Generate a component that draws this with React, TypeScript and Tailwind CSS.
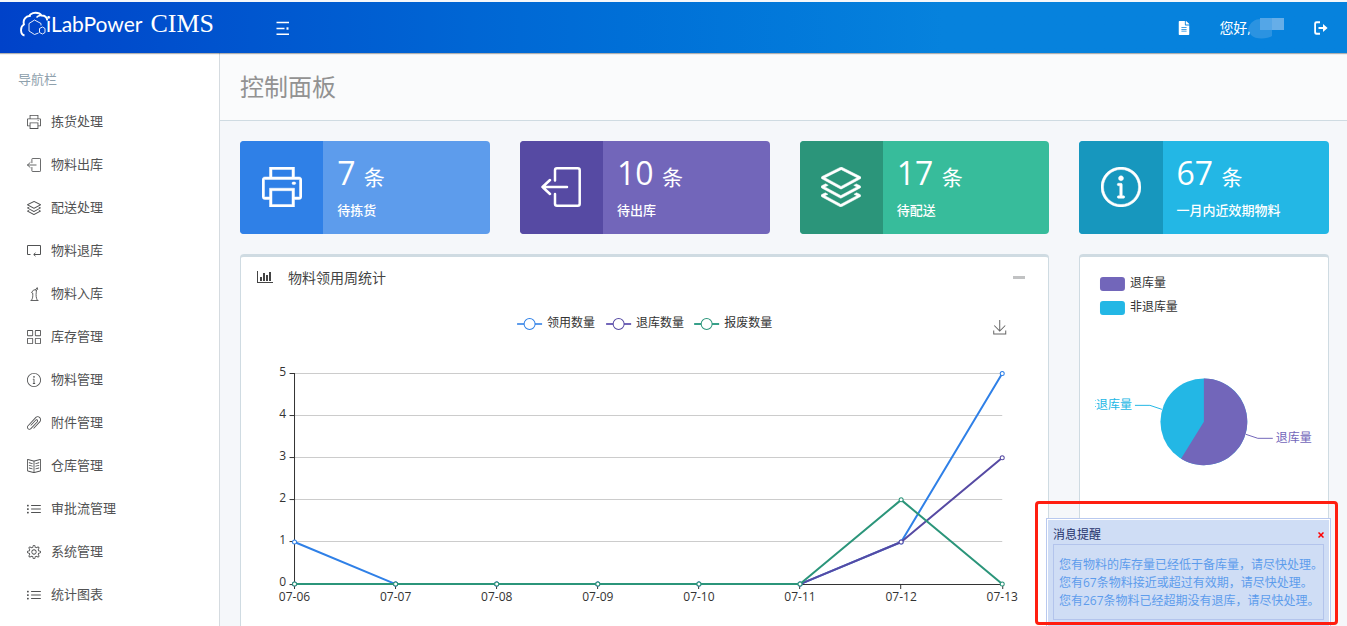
import type { ComponentType, ReactNode } from "react";
import {
  SlBookOpen,
  SlGrid,
  SlInfo,
  SlLayers,
  SlList,
  SlPaperClip,
  SlPrinter,
  SlSettings,
} from "react-icons/sl";
import { FaFileAlt } from "react-icons/fa";

interface IconProps {
  className?: string;
}

type Icon = ComponentType<IconProps>;

function ExitIcon({ className }: IconProps) {
  return (
    <svg viewBox="0 0 40 40" className={className} fill="none" stroke="currentColor" aria-hidden="true">
      <g strokeWidth="2.500" strokeLinecap="round" strokeLinejoin="round">
        <path d="M14 13.500V3.300a2 2 0 0 1 2-2h20.700a2 2 0 0 1 2 2v33.400a2 2 0 0 1-2 2H16a2 2 0 0 1-2-2V27" />
        <path d="M26 20H1.500M9 13l-7.500 7L9 27" />
      </g>
    </svg>
  );
}

function ReturnIcon({ className }: IconProps) {
  return (
    <svg viewBox="0 0 14 14" className={className} fill="none" stroke="currentColor" aria-hidden="true">
      <path d="M3.500 10.500h-3v-9h13v9H7" />
      <path d="M8.500 8.800 6.700 10.500l1.800 1.700" />
    </svg>
  );
}

function TowerIcon({ className }: IconProps) {
  return (
    <svg viewBox="0 0 14 14" className={className} fill="none" stroke="currentColor" strokeWidth="0.900" aria-hidden="true">
      <path d="M3.500 13.500h8M4.500 13.300c1.200-2 1.500-4 1.200-7.300L4.500 5.500l2.200-2.600h2.600v2.300c-.6 3 0 6 1 8.100M8.300 2.900 10.200.600l.5 1.700-1.400 1.200" />
    </svg>
  );
}

function BarChartIcon({ className }: IconProps) {
  return (
    <svg viewBox="0 0 16 12" className={className} fill="currentColor" aria-hidden="true">
      <path d="M0 0h1v11h15v1H0zM3 6h2v4H3zM6 2h2v8H6zM9 4h2v6H9zM12 1h2v9h-2z" />
    </svg>
  );
}

function MenuIcon({ className }: IconProps) {
  return (
    <svg viewBox="0 0 14 14" className={className} fill="none" stroke="currentColor" strokeWidth="1.600" aria-hidden="true">
      <path d="M.5 1.500h12.500M.5 7.500h8M.5 13.200h12.500" />
      <path d="M10.500 7.500h2" strokeWidth="2.400" />
    </svg>
  );
}

function SignOutIcon({ className }: IconProps) {
  return (
    <svg viewBox="0 0 14 14" className={className} fill="currentColor" aria-hidden="true">
      <path d="M2.500.300H6v2H2.800a.8.800 0 0 0-.8.800v7.800c0 .5.300.8.800.8H6v2H2.500A2.300 2.300 0 0 1 .2 11.400V2.600A2.300 2.300 0 0 1 2.500.300z" />
      <path d="M4.500 6H9V3l4.600 4L9 11V8H4.500z" />
    </svg>
  );
}

function CloudLogo({ className }: IconProps) {
  return (
    <svg viewBox="0 0 30 26" className={className} fill="none" stroke="currentColor" strokeLinejoin="round" aria-hidden="true">
      <path d="M4.500 24.500C0 23.500 0 15.500 4 13.500 2.500 9 6 4.500 10 5c-1.500-.4 1.500-3.200 5.500-3.200S20.500 3 21.500 4.500c3.500 0 5.500 2 5.800 5" strokeWidth="1.900" />
      <path d="M21.500 4.500c-2.500-.3-4 .7-5 2" strokeWidth="1.400" />
      <path d="m9 12.500 5.500-3.500 6.500 3.500v2M9 12.500V20l5.500 3.500 4-1.500" strokeWidth="0.900" />
      <path d="m19.500 17.500 3-1.500 2.500 1.500v4L22.500 23l-3-1.500z" strokeWidth="0.900" />
    </svg>
  );
}

const navItems: Array<{ label: string; icon: Icon }> = [
  { label: "拣货处理", icon: SlPrinter },
  { label: "物料出库", icon: ExitIcon },
  { label: "配送处理", icon: SlLayers },
  { label: "物料退库", icon: ReturnIcon },
  { label: "物料入库", icon: TowerIcon },
  { label: "库存管理", icon: SlGrid },
  { label: "物料管理", icon: SlInfo },
  { label: "附件管理", icon: SlPaperClip },
  { label: "仓库管理", icon: SlBookOpen },
  { label: "审批流管理", icon: SlList },
  { label: "系统管理", icon: SlSettings },
  { label: "统计图表", icon: SlList },
];

const stats: Array<{
  count: number;
  label: string;
  icon: Icon;
  dark: string;
  light: string;
}> = [
  { count: 7, label: "待拣货", icon: SlPrinter, dark: "bg-[#2f80e7]", light: "bg-[#5d9cec]" },
  { count: 10, label: "待出库", icon: ExitIcon, dark: "bg-[#564aa3]", light: "bg-[#7266ba]" },
  { count: 17, label: "待配送", icon: SlLayers, dark: "bg-[#2b957a]", light: "bg-[#37bc9b]" },
  { count: 67, label: "一月内近效期物料", icon: SlInfo, dark: "bg-[#1797be]", light: "bg-[#23b7e5]" },
];

const messages = [
  "您有物料的库存量已经低于备库量，请尽快处理。",
  "您有67条物料接近或超过有效期，请尽快处理。",
  "您有267条物料已经超期没有退库，请尽快处理。",
];

const days = ["07-06", "07-07", "07-08", "07-09", "07-10", "07-11", "07-12", "07-13"];

const series = [
  { name: "领用数量", color: "#2f80e7", ring: "#5d9cec", legendX: 276, values: [1, 0, 0, 0, 0, 0, 1, 5] },
  { name: "退库数量", color: "#564aa3", ring: "#7266ba", legendX: 365, values: [0, 0, 0, 0, 0, 0, 1, 3] },
  { name: "报废数量", color: "#2b957a", ring: "#37a08a", legendX: 453, values: [0, 0, 0, 0, 0, 0, 2, 0] },
];

const plot = { left: 53.5, right: 761, top: 74.5, bottom: 285 };

const xAt = (index: number) =>
  plot.left + ((plot.right - plot.left) * index) / (days.length - 1);
const yAt = (value: number) =>
  plot.bottom - ((plot.bottom - plot.top) * value) / 5;
const crisp = (n: number) => Math.floor(n) + 0.5;

function LineChart() {
  return (
    <svg viewBox="0 0 807 360" className="block w-full text-[12px]" role="img" aria-label="物料领用周统计">
      {series.map((s) => (
        <g key={s.name}>
          <path d={`M${s.legendX} 25h25`} stroke={s.ring} strokeWidth="2" />
          <circle cx={s.legendX + 12.5} cy="25" r="5.500" fill="#fff" stroke={s.color} />
          <text x={s.legendX + 30} y="28" fill="#333">
            {s.name}
          </text>
        </g>
      ))}
      <path d="M758.500 21v11M753 26.500l5.500 5.500 5.500-5.500M752.500 31.500v3.500h12v-3.500" fill="none" stroke="#666" />

      {[0, 1, 2, 3, 4, 5].map((tick) => (
        <g key={tick}>
          {tick > 0 && (
            <path d={`M${plot.left} ${crisp(yAt(tick))}H${plot.right}`} stroke="#ccc" />
          )}
          <path d={`M48.500 ${crisp(yAt(tick))}h5`} stroke="#333" />
          <text x="45" y={Math.round(yAt(tick)) + 2} textAnchor="end" fill="#333">
            {tick}
          </text>
        </g>
      ))}
      <path d={`M${plot.left} 74V285.500H${plot.right}`} fill="none" stroke="#333" />
      {days.map((day, i) => (
        <g key={day}>
          <path d={`M${crisp(xAt(i))} 285v5`} stroke="#333" />
          <text x={xAt(i)} y="302" textAnchor="middle" fill="#333">
            {day}
          </text>
        </g>
      ))}

      {series.map((s) => (
        <g key={s.name}>
          <polyline
            points={s.values.map((v, i) => `${xAt(i)},${yAt(v)}`).join(" ")}
            fill="none"
            stroke={s.color}
            strokeWidth="2"
            strokeLinejoin="bevel"
          />
          {s.values.map((v, i) => (
            <circle key={i} cx={xAt(i)} cy={yAt(v)} r="2" fill="#fff" stroke={s.color} />
          ))}
        </g>
      ))}
    </svg>
  );
}

function PieChart() {
  return (
    <svg viewBox="0 0 248 400" className="block w-full text-[12px]" role="img" aria-label="退库量">
      <clipPath id="pie-label">
        <rect x="15" y="130" width="60" height="40" />
      </clipPath>
      <rect x="20" y="20" width="25" height="14" rx="3" fill="#7266ba" />
      <text x="50" y="30" fill="#333">退库量</text>
      <rect x="20" y="44" width="25" height="14" rx="3" fill="#23b7e5" />
      <text x="50" y="54" fill="#333">非退库量</text>

      <circle cx="124" cy="165" r="43.500" fill="#23b7e5" />
      <path d="M124 165V121.500A43.500 43.500 0 1 1 101.100 202z" fill="#7266ba" />
      <path d="M166 177.500 178 181.500h15" fill="none" stroke="#7266ba" />
      <text x="196" y="185" fill="#7266ba">退库量</text>
      <path d="M82 152.500 70 148.500H55" fill="none" stroke="#23b7e5" />
      <text x="52" y="152" textAnchor="end" fill="#23b7e5" clipPath="url(#pie-label)">
        非退库量
      </text>
    </svg>
  );
}

function Panel({ className, children }: { className: string; children: ReactNode }) {
  return (
    <section className={`rounded border border-t-[3px] border-[#cfdbe2] bg-white ${className}`}>
      {children}
    </section>
  );
}

function Header() {
  return (
    <header className="relative z-10 flex h-[51px] shrink-0 items-center bg-linear-to-r from-[#0042c9] via-[#0066d4] via-35% to-[#0682dd] to-70% pr-[19px] text-white shadow-[0_1px_1px_rgba(0,0,0,0.3)]">
      <a href="#" className="flex w-[276px] items-center pb-2 pl-5" aria-label="iLabPower CIMS">
        <CloudLogo className="h-[26px] w-[30px]" />
        <span className="-ml-1 font-[Lato] text-[21px] leading-6">iLabPower</span>
        <span className="ml-2 font-['Liberation_Serif'] text-[26px] leading-6">CIMS</span>
      </a>
      <button type="button" aria-label="菜单">
        <MenuIcon className="size-[14px]" />
      </button>
      <div className="ml-auto flex items-center">
        <a href="#" aria-label="文档">
          <FaFileAlt className="size-[14px]" />
        </a>
        <a href="#" className="ml-7 flex items-center text-[14px]">
          您好,
          <svg viewBox="0 0 36 22" className="-ml-[3px] h-[22px] w-[36px]" aria-hidden="true">
            <path d="M0 12C2 5 7 2 13 2h11v17c-4 3-17 4-21-1z" fill="#2b93e1" />
            <path d="M12 1h24v12H12z" fill="#54a6e7" />
            <path d="M24 1h12v12H24z" fill="#66aee8" />
          </svg>
        </a>
        <button type="button" aria-label="退出" className="ml-[30px]">
          <SignOutIcon className="size-[14px]" />
        </button>
      </div>
    </header>
  );
}

function Sidebar() {
  return (
    <nav className="w-[220px] shrink-0 overflow-hidden border-r border-[#d5dbe0] bg-white text-[13px]">
      <div className="flex h-[47px] items-center pt-[6px] pl-[18px] text-[#8fa1ad]">导航栏</div>
      <ul>
        {navItems.map(({ label, icon: NavIcon }) => (
          <li key={label}>
            <a href="#" className="flex h-[43px] items-center gap-[10px] pl-[27px] text-[#515253]">
              <NavIcon className="size-[14px]" />
              {label}
            </a>
          </li>
        ))}
      </ul>
    </nav>
  );
}

function Notification() {
  return (
    <aside className="fixed right-4 bottom-0 z-20 w-[285px] text-[12px]">
      <div className="border border-b-0 border-[#b9c9ef] bg-white px-px pt-px">
        <div className="bg-[#cfddf5] px-[5px] pb-[6px]">
          <div className="flex h-6 items-center justify-between pt-[6px]">
            <h2 className="text-[#1f336b]">消息提醒</h2>
            <button type="button" aria-label="关闭" className="text-[#f00]">
              <svg viewBox="0 0 6 6" className="size-[6px]" stroke="currentColor" strokeWidth="1.500" aria-hidden="true">
                <path d="m.5.500 5 5M5.500.500l-5 5" />
              </svg>
            </button>
          </div>
          <div className="border border-[#b3c4ec] px-[5px] pt-[11px] pb-[9px] leading-[18px] whitespace-nowrap text-[#5d9cec]">
            {messages.map((message) => (
              <p key={message}>{message}</p>
            ))}
          </div>
        </div>
      </div>
      <div className="pointer-events-none absolute -top-[17px] -right-[7px] bottom-px -left-[11px] rounded border-[3px] border-[#ff1e10]" />
    </aside>
  );
}

export default function App() {
  return (
    <div className="flex h-screen flex-col overflow-hidden bg-[#f5f7fa] pt-[2px] font-['Open_Sans','Noto_Sans_CJK_SC',sans-serif] text-[#515253]" lang="zh-CN">
      <Header />
      <div className="flex min-h-0 flex-1">
        <Sidebar />
        <main className="min-w-0 flex-1 overflow-hidden bg-[#f5f7fa]">
          <h1 className="flex h-[68px] items-center border-b border-[#cfdbe2] bg-[#fafbfc] px-5 text-[24px] text-[#929292]">
            控制面板
          </h1>
          <div className="grid grid-cols-4 gap-x-[30px] gap-y-5 py-5 pr-[18px] pl-5">
            {stats.map(({ count, label, icon: StatIcon, dark, light }) => (
              <div key={label} className={`flex h-[93px] overflow-hidden rounded text-white ${light}`}>
                <div className={`flex w-1/3 items-center justify-center pb-[2px] ${dark}`}>
                  <StatIcon className="size-10 stroke-[12px]" />
                </div>
                <div className="pt-3 pl-[14px]">
                  <div className="text-[32px] leading-10">
                    <span className="font-medium">{count}</span>{" "}
                    <span className="text-[21px]">条</span>
                  </div>
                  <div className="mt-[3px] text-[13px] leading-5 font-medium">{label}</div>
                </div>
              </div>
            ))}

            <Panel className="col-span-3">
              <div className="flex h-[42px] items-center pr-[23px] pb-[2px] pl-4 text-[14px] text-[#444]">
                <BarChartIcon className="h-3 w-4" />
                <h2 className="ml-[15px]">物料领用周统计</h2>
                <button type="button" aria-label="收起" className="ml-auto h-[3px] w-3 bg-[#c1c2c3]" />
              </div>
              <LineChart />
            </Panel>
            <Panel className="col-span-1">
              <PieChart />
            </Panel>
          </div>
        </main>
      </div>
      <Notification />
    </div>
  );
}
